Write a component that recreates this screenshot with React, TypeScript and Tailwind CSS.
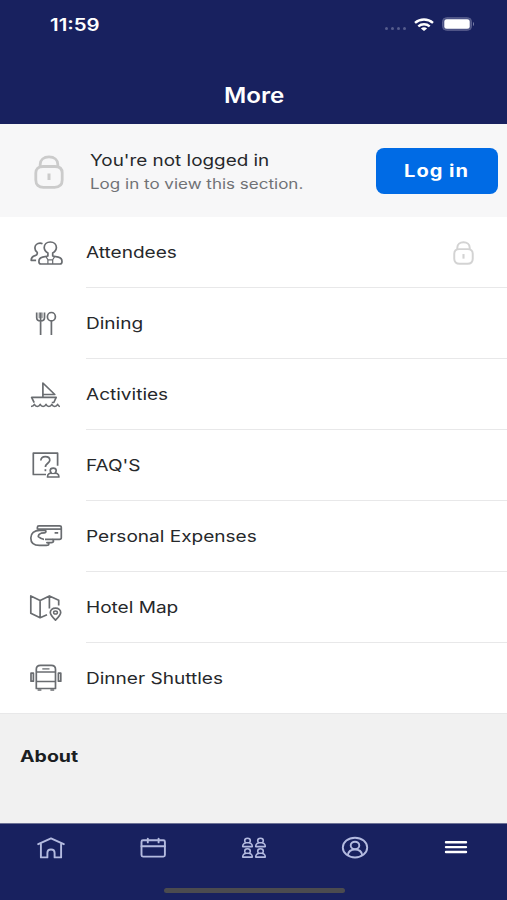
import React from 'react';

interface IconProps {
  className?: string;
  children: React.ReactNode;
}

const RowIcon: React.FC<IconProps> = ({ children }) => (
  <svg
    viewBox="0 0 36 32"
    className="h-8 w-9 shrink-0 text-[#696c70]"
    fill="none"
    stroke="currentColor"
    strokeWidth="1.7"
    strokeLinejoin="round"
  >
    {children}
  </svg>
);

const AttendeesIcon = () => (
  <RowIcon>
    <path d="M19.9 19v-3c-2.2-1.2-3.7-3.1-3.700-5.400C16.200 7.300 18.700 5 22.300 5s6.100 2.300 6.100 5.600c0 2.300-1.500 4.200-3.700 5.400v3l5.600 1.200c2.600.6 3.700 2 3.700 4.300 0 1.600-.5 2.500-2 2.500H12.900c-1.500 0-2-.9-2-2.500 0-2.300 1.100-3.700 3.700-4.300z" />
    <path d="M18 19.600l1.900 3.200h4.800l1.900-3.200M19.900 22.800V27M24.700 22.800V27" strokeWidth="1.2" />
    <path d="M14.500 6.800c-.8-.4-1.600-.6-2.400-.6-3 0-5.200 2-5.200 4.700 0 1.900.9 3.300 2.300 4.500.5 2-.3 2.700-2.100 3.200-2.800.8-3.900 2-3.900 4.700h4.900" />
  </RowIcon>
);

const DiningIcon = () => (
  <RowIcon>
    <path d="M8.700 4.500v5.300c0 2.100 1.400 3.200 3.900 3.200s3.900-1.100 3.900-3.200V4.500M12.600 4.500V27M23.400 13v14" />
    <path d="M11.200 4.500v5.700M14 4.500v5.700" strokeWidth="1" />
    <ellipse cx="23.400" cy="8.700" rx="4" ry="4.200" />
  </RowIcon>
);

const ActivitiesIcon = () => (
  <RowIcon>
    <path d="M14.900 18.500V4l11.900 11.500H14.900" />
    <path d="M6.200 23.700l-2.600-5.300h24.600l-2.400 5.100h-2" />
    <path
      d="M3 27.400c2 0 2.800-.7 3.400-2.100.6 1.400 1.600 2.100 2.900 2.100s2.300-.7 2.900-2.100c.6 1.400 1.600 2.100 2.900 2.100s2.300-.7 2.900-2.100c.6 1.400 1.600 2.100 2.900 2.100s2.300-.7 2.900-2.100c.6 1.400 1.600 2.100 2.900 2.100s2.300-.7 2.900-2.100c.6 1.400 1.200 2.100 2.400 2.100"
      strokeWidth="1.5"
    />
  </RowIcon>
);

const FaqIcon = () => (
  <RowIcon>
    <path d="M18 24.500H5.300V3.200h24.300v12.500" />
    <path d="M12.800 10.500c.2-2.500 1.900-3.900 4.500-3.900s4.500 1.400 4.500 3.600c0 3-4.400 3.200-4.400 6.900" />
    <path d="M17.400 19.200v2" />
    <path d="M23.200 22.800c-.7-.7-1-1.500-1-2.200 0-1.500 1.200-2.500 3-2.500s3 1 3 2.500c0 .7-.3 1.500-1 2.200l2.200.9c1.100.5 1.500 1.500 1.500 3.300H19.500c0-1.800.4-2.800 1.500-3.300z" />
    <path d="M22.500 23.500h5.400" strokeWidth="1.2" />
  </RowIcon>
);

const ExpensesIcon = () => (
  <RowIcon>
    <path d="M9.400 8.400V6.200c0-.9.500-1.400 1.500-1.400h20.600c1.200 0 1.800.6 1.800 1.600v10.400c0 1-.6 1.600-1.800 1.600H17" />
    <path d="M9.400 8.100h24" />
    <path d="M17 9.300h-5.200c-5.600 0-9 3-9 7.600 0 4.700 3.300 7.500 8.700 7.500h6.800c1.600 0 2.500-.5 2.500-1.400 0-.9-.7-1.400-1.900-1.400h4.300c1.500 0 2.300-.6 2.300-1.600 0-.7-.4-1.300-1.100-1.600" />
    <path d="M17 9.300c1.600.7 1.200 2.400-.8 2.600l-3 .3c-2 .6-2.900 1.900-2.900 3.500 1.500 1.300 3.500 2.700 5.700 2.700M26.600 11.800h3.600" />
  </RowIcon>
);

const HotelMapIcon = () => (
  <RowIcon>
    <path d="M19 22.700l-6.900 3-9.300-4.400V3.900l9.300 4.500 9.300-4.500 9.300 4.400v5.200M12.100 8.400v17.300M21.400 3.900v12.600" />
    <path d="M27.500 28.100c-3.300-3.200-5.200-5.200-5.200-7.600 0-2.500 2.200-4.400 5.200-4.400s5.200 1.900 5.200 4.400c0 2.400-1.900 4.400-5.200 7.600z" />
    <ellipse cx="27.500" cy="20.500" rx="1.900" ry="1.600" strokeWidth="1.5" />
  </RowIcon>
);

const ShuttleIcon = () => (
  <RowIcon>
    <path d="M8.300 26.500V7.300c0-2.400 1.600-3.900 4.200-3.900h10.800c2.600 0 4.200 1.500 4.200 3.900v19.200z" />
    <path d="M8.300 10h19.200M8.300 19.500h19.200" />
    <path d="M14.300 6.900h7.200" strokeWidth="1.3" />
    <path d="M9.600 28h3.800M22.400 28h3.800" strokeWidth="1.4" />
    <path d="M3 11.200h2.400v8H3zM30.400 11.200h2.400v8h-2.400z" />
  </RowIcon>
);

const LockIcon: React.FC<{ className: string; stroke: number }> = ({ className, stroke }) => (
  <svg viewBox="0 0 30 34" preserveAspectRatio="none" className={className} fill="none" stroke="currentColor" strokeWidth={stroke}>
    <path d="M6.200 11.500V9.300c0-4.400 3.500-7.400 8.800-7.400s8.800 3 8.800 7.400v2.200" />
    <path d="M9 11.500h12c4.700 0 7.200 2.400 7.200 6.600v7c0 4.600-2.800 7.200-7.600 7.200H9.400c-4.800 0-7.600-2.600-7.600-7.200v-7c0-4.200 2.500-6.600 7.200-6.600z" />
    <path d="M15 18.500V25" strokeWidth="3" />
  </svg>
);

const TabIcon: React.FC<IconProps> = ({ className = '', children }) => (
  <svg
    viewBox="0 0 28 24"
    className={`h-6 w-7 ${className}`}
    fill="none"
    stroke="currentColor"
    strokeWidth="1.9"
    strokeLinecap="round"
    strokeLinejoin="round"
  >
    {children}
  </svg>
);

const Person = () => (
  <path d="M3.800 5.300c-.7-.5-1.100-1.200-1.100-2C2.700 1.800 3.800.8 5.500.8s2.800 1 2.800 2.500c0 .8-.4 1.500-1.100 2M3.800 5.300h3.400l1.800.8c.9.500 1.300 1.300 1.300 3H.7c0-1.700.4-2.500 1.300-3z" />
);

const items = [
  { label: 'Attendees', icon: <AttendeesIcon />, locked: true },
  { label: 'Dining', icon: <DiningIcon /> },
  { label: 'Activities', icon: <ActivitiesIcon /> },
  { label: "FAQ'S", icon: <FaqIcon /> },
  { label: 'Personal Expenses', icon: <ExpensesIcon /> },
  { label: 'Hotel Map', icon: <HotelMapIcon /> },
  { label: 'Dinner Shuttles', icon: <ShuttleIcon /> },
];

const StatusBar = () => (
  <div className="flex h-12 items-center justify-between pr-8 pl-[50px]">
    <span className="mt-[3px] origin-left scale-x-[1.2] text-[17px] font-semibold">11:59</span>
    <div className="flex items-center">
      <div className="mt-[9px] mr-2 flex gap-[3px]">
        {[0, 1, 2, 3].map((dot) => (
          <span key={dot} className="h-[3px] w-[3px] rounded-full bg-[#555c8c]" />
        ))}
      </div>
      <svg viewBox="0 0 20 13" className="mr-2 h-[13px] w-5" fill="none" stroke="white" strokeWidth="2.4">
        <path d="M1 4.800C6.200.3 13.800.3 19 4.800" />
        <path d="M4.300 8.300c3.300-2.800 8.100-2.800 11.400 0" />
        <path d="M10 12.900L6.900 10.400c1.800-1.500 4.400-1.500 6.200 0z" fill="white" stroke="none" />
      </svg>
      <svg viewBox="0 0 33 14" className="h-3.5 w-[33px]">
        <rect x=".5" y=".7" width="29" height="12.600" rx="4" fill="#4b5285" stroke="#5a608f" />
        <rect x="2.300" y="2.300" width="25.400" height="9.400" rx="2.500" fill="white" />
        <path d="M31 5c1.400.5 1.400 3.500 0 4z" fill="#7b80a8" />
      </svg>
    </div>
  </div>
);

const LoginBanner = () => (
  <div className="flex h-[93px] items-center bg-[#f7f7f8] pr-[9px] pl-[34px]">
    <LockIcon className="mt-0.5 h-[34px] w-[30px] shrink-0 text-[#cbcbcb]" stroke={2.8} />
    <div className="mt-0.5 ml-[26px] flex-1 whitespace-nowrap">
      <p className="origin-left scale-x-[1.18] text-[16px] leading-6 text-[#26282b]">You're not logged in</p>
      <p className="origin-left scale-x-[1.215] text-[14px] leading-6 text-[#707276]">Log in to view this section.</p>
    </div>
    <button className="mt-px h-[46px] w-[122px] rounded-lg bg-[#006be5] text-[17px] font-bold text-white">
      <span className="mt-0.5 inline-block scale-x-[1.18] tracking-wider">Log in</span>
    </button>
  </div>
);

const App: React.FC = () => (
  <div className="flex h-[900px] w-[507px] flex-col overflow-hidden bg-white font-['Inter',sans-serif]">
    <header className="flex h-[124px] flex-col bg-[#18215f] text-white">
      <StatusBar />
      <h1 className="mt-[33px] text-center text-[21px] leading-[30px] font-semibold">
        <span className="inline-block translate-x-px scale-x-[1.15]">More</span>
      </h1>
    </header>

    <LoginBanner />

    <ul className="flex flex-col">
      {items.map((item) => (
        <li key={item.label} className="group flex h-[71px] items-center pl-7 last:h-[70px]">
          {item.icon}
          <div className="ml-[22px] flex h-full flex-1 items-center justify-between border-b border-[#e8e8e9] pr-[33px] group-last:border-b-0">
            <span className="-mt-px origin-left scale-x-[1.19] text-[16px] whitespace-nowrap text-[#26282b]">
              {item.label}
            </span>
            {item.locked && <LockIcon className="mt-px h-6 w-[21px] text-[#d3d3d3]" stroke={2.8} />}
          </div>
        </li>
      ))}
    </ul>

    <section className="flex-1 border-t border-[#e8e8e9] bg-[#f1f1f1] pt-[30px] pl-5">
      <h2 className="inline-block origin-left scale-x-[1.22] text-[16px] leading-6 font-bold text-[#1b1e22]">About</h2>
    </section>

    <nav className="h-[77px] border-t border-[#6c7195] bg-[#18215f] pt-3">
      <div className="flex justify-around text-[#b4bbe0]">
        <TabIcon>
          <path d="M1.200 8.200L14 2.400l12.800 5.800M3.900 7.500v13.900h6.500v-4.500c0-2.100 1.300-3.400 3.600-3.400s3.600 1.300 3.600 3.400v4.500h6.500V7.500" />
        </TabIcon>
        <TabIcon className="translate-x-px">
          <rect x="2.500" y="4.300" width="23.400" height="16.300" rx="1.500" />
          <path d="M2.500 10.300h23.400M8.800 2.600v3.800M19.600 2.600v3.800" />
        </TabIcon>
        <TabIcon className="translate-x-px">
          <g strokeWidth="1.600">
            <g transform="translate(2 1.500)"><Person /></g>
            <g transform="translate(15 1.500)"><Person /></g>
            <g transform="translate(2 12)"><Person /></g>
            <g transform="translate(15 12)"><Person /></g>
          </g>
        </TabIcon>
        <TabIcon>
          <ellipse cx="14" cy="11.600" rx="12.200" ry="9.900" />
          <ellipse cx="14" cy="9.400" rx="4.300" ry="3.700" />
          <path d="M6.800 19.100c.6-3.700 3.400-5.600 7.200-5.600s6.600 1.900 7.200 5.600" />
        </TabIcon>
        <TabIcon className="text-white">
          <path d="M4 6.200h20M4 11.100h20M4 16h20" strokeWidth="2.400" />
        </TabIcon>
      </div>
      <div className="mx-auto mt-[28px] h-[5px] w-[181px] translate-x-px rounded-full bg-[#4b4b4f]" />
    </nav>
  </div>
);

export default App;
